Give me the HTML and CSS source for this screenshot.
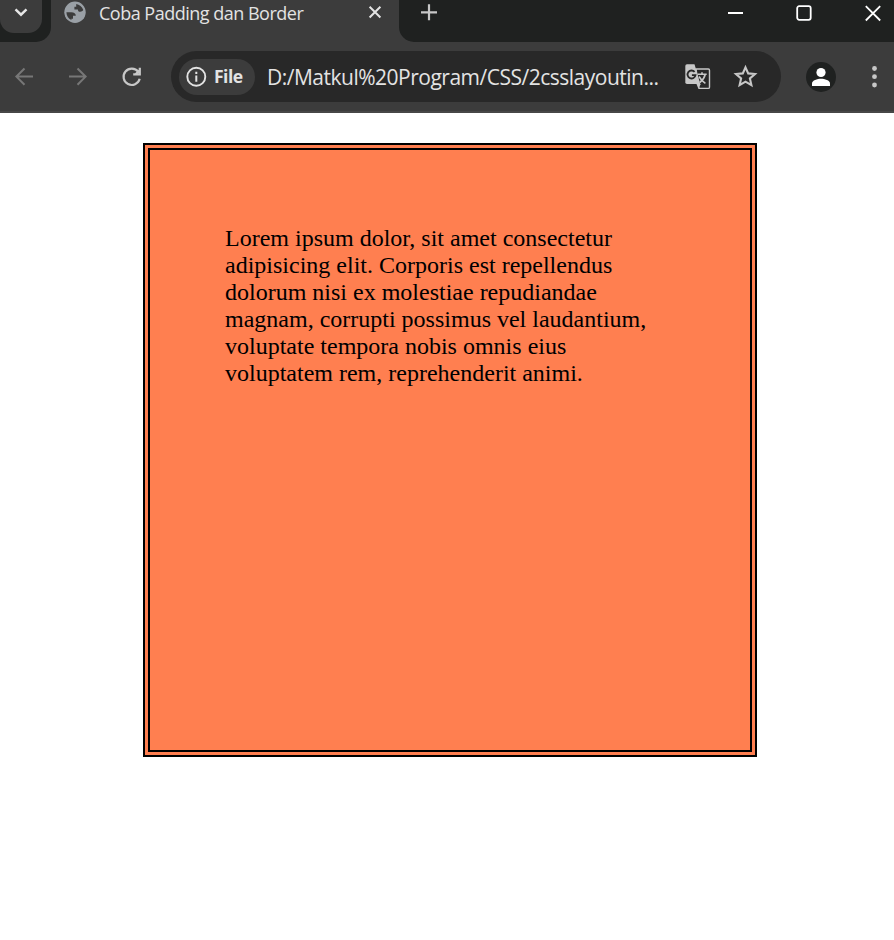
FILE: index.html
```html
<!DOCTYPE html>
<html lang="id">
<head>
<meta charset="utf-8">
<title>Coba Padding dan Border</title>
<link rel="stylesheet" href="styles.css">
</head>
<body>
<header class="browser">
  <div class="tabstrip">
    <div class="strip-left">
      <div class="tab-search"><svg width="42" height="33" viewBox="0 0 42 33"><path d="M15.5 9.3l5.5 5.4 5.5-5.4" fill="none" stroke="#e6e6e6" stroke-width="2.4"/></svg></div>
    </div>
    <div class="tab">
      <svg class="globe" width="22" height="24" viewBox="0 0 22 24"><circle cx="11" cy="12.3" r="10.7" fill="#9aa0a6"/><path d="M12.2 3.9c3.2.4 6 2.8 7.1 6.2-.8 1.2-1.7 1.7-3.1 1.7-1.6 0-2.3-.8-2.3-2.3h-3.5V6.8h1.8zM2.4 12.2h4.8c3 0 4.6 1.3 4.6 3.6H9v2.900H7.400v1.200c-3-1.400-4.900-4.200-5-7.700z" fill="#3c3c3c"/></svg>
      <span class="title">Coba Padding dan Border</span>
      <svg class="close" width="14" height="24" viewBox="0 0 14 24"><path d="M1.6 6.8l10.8 10.7M12.4 6.8L1.6 17.5" stroke="#e3e3e3" stroke-width="2"/></svg>
    </div>
    <div class="strip-right">
      <svg class="plus" width="16" height="24" viewBox="0 0 16 24"><path d="M0 12.3h16M8 4.3v16" stroke="#c7c7c7" stroke-width="2.2"/></svg>
      <svg class="minimize" width="15" height="26" viewBox="0 0 15 26"><path d="M0 13h15" stroke="#fff" stroke-width="2"/></svg>
      <svg class="maximize" width="16" height="26" viewBox="0 0 16 26"><rect x="1.2" y="6.2" width="13.5" height="13.6" rx="2" fill="none" stroke="#fff" stroke-width="1.8"/></svg>
      <svg width="16" height="26" viewBox="0 0 16 26"><path d="M.8 6.2l14.4 14.3M15.2 6.2L.8 20.5" stroke="#fff" stroke-width="1.8"/></svg>
    </div>
  </div>
  <div class="toolbar">
    <svg class="back" width="18" height="18" viewBox="0 0 18 18"><path d="M18 8.6H1.5M9.5.5L1.4 8.6l8.1 8.1" fill="none" stroke="#777" stroke-width="2"/></svg>
    <svg class="forward" width="18" height="18" viewBox="0 0 18 18"><path d="M0 8.600h16.500M8.500.5L16.600 8.600l-8.100 8.100" fill="none" stroke="#777" stroke-width="2"/></svg>
    <svg class="reload" width="20" height="20" viewBox="0 0 20 20"><path d="M16.300 4.800A8.200 8.200 0 1 0 17.700 11.800" fill="none" stroke="#c7c7c7" stroke-width="2.2"/><path d="M17.800.7v6.600H11.200M13.800 7l3.800-3.600" fill="none" stroke="#c7c7c7" stroke-width="2.2"/></svg>
    <div class="omnibox">
      <div class="chip">
        <svg width="20" height="20" viewBox="0 0 20 20"><circle cx="10.3" cy="9.700" r="9" fill="none" stroke="#e3e3e3" stroke-width="1.9"/><path d="M10.300 8.500v6.200M10.300 4.800v2.100" stroke="#e3e3e3" stroke-width="2"/></svg>
        <span class="scheme">File</span>
      </div>
      <span class="url">D:/Matkul%20Program/CSS/2csslayoutin...</span>
      <svg class="translate" width="26" height="26" viewBox="0 0 26 26"><path d="M11 5h12.300q1.200 0 1.200 1.200v17q0 1.200-1.200 1.200H14z" fill="none" stroke="#c7c7c7" stroke-width="1.4"/><path d="M2 .3h7.500L15.300 20H2Q.3 20 .3 18.300V2Q.3.3 2 .3z" fill="#c7c7c7"/><path d="M11.500 20h4.300l-2.500 4.400z" fill="#c7c7c7"/><path d="M9.600 7.900a4 4 0 1 0 .9 3.200H6.900" fill="none" stroke="#282828" stroke-width="1.8"/><path d="M12.700 10.300h9M17 8.300v2M20.200 10.500c-.8 3.400-2.700 6-5.400 8M14 12.500c1.500 2.600 3.600 5 6.400 6.900" fill="none" stroke="#c7c7c7" stroke-width="1.6"/></svg>
      <svg class="star" width="24" height="23" viewBox="0 0 24 23"><path d="M12.500 2.300l2.700 6.100 6.800.6-5.100 4.500 1.500 6.700-5.900-3.500-5.900 3.500 1.500-6.700L3 9l6.800-.6z" fill="none" stroke="#c7c7c7" stroke-width="2.1"/></svg>
    </div>
    <svg class="avatar" width="30" height="30" viewBox="0 0 30 30"><circle cx="15" cy="15" r="15" fill="#1f2120"/><circle cx="15" cy="10.5" r="4.6" fill="#fff"/><path d="M6 24v-2.600C6 18.300 11.300 16.700 15 16.700s9 1.600 9 4.700V24z" fill="#fff"/></svg>
    <svg class="menu" width="6" height="24" viewBox="0 0 6 24"><g fill="#c7c7c7"><circle cx="2.5" cy="3.5" r="2.4"/><circle cx="2.5" cy="11.7" r="2.4"/><circle cx="2.5" cy="20" r="2.4"/></g></svg>
  </div>
</header>
<main class="page">
  <div class="box">Lorem ipsum dolor, sit amet consectetur adipisicing elit. Corporis est repellendus dolorum nisi ex molestiae repudiandae magnam, corrupti possimus vel laudantium, voluptate tempora nobis omnis eius voluptatem rem, reprehenderit animi.</div>
</main>
</body>
</html>
```
FILE: styles.css
```css
* { box-sizing: border-box; }
body {
  margin: 0;
  background: #fff;
  overflow: hidden;
}
svg { display: block; flex: none; overflow: visible; }
.browser {
  height: 113px;
  background: #3c3c3c;
  border-bottom: 2px solid #474747;
  font-family: "Open Sans", "Noto Sans", sans-serif;
  color: #e3e3e3;
  white-space: nowrap;
}
.tabstrip { display: flex; height: 42px; }
.strip-left {
  width: 51px;
  background: #1f2120;
  border-bottom-right-radius: 15px;
}
.tab-search {
  width: 42px;
  height: 33px;
  background: #3c3c3c;
  border-radius: 0 0 14px 14px;
}
.tab {
  display: flex;
  width: 348px;
  padding-left: 13px;
}
.title {
  width: 269px;
  margin-left: 13px;
  font-size: 18px;
  line-height: 27px;
  letter-spacing: -0.5px;
}
.strip-right {
  display: flex;
  flex: 1;
  padding-left: 22px;
  background: #1f2120;
  border-bottom-left-radius: 15px;
}
.minimize { margin-left: 291px; }
.maximize { margin: 0 53px; }
.toolbar {
  display: flex;
  align-items: center;
  height: 69px;
  padding-left: 15px;
}
.forward { margin-left: 36px; }
.reload { margin-left: 35px; }
.omnibox {
  display: flex;
  align-items: center;
  width: 610px;
  height: 51px;
  margin-left: 29px;
  padding-left: 8px;
  border-radius: 26px;
  background: #282828;
}
.chip {
  display: flex;
  align-items: center;
  width: 76px;
  height: 36px;
  padding-left: 7px;
  border-radius: 18px;
  background: #3c3c3c;
}
.scheme {
  margin: -1px 0 0 8px;
  font-size: 17.5px;
  font-weight: 700;
  letter-spacing: -0.5px;
}
.url {
  width: 406px;
  margin-left: 12px;
  font-size: 21px;
  letter-spacing: -0.5px;
}
.translate { margin-left: 12px; }
.star { margin-left: 22px; }
.avatar { margin-left: 25px; }
.menu { margin-left: 36px; }
.page { padding: 30px 0 0 143px; }
.box {
  width: 614px;
  height: 614px;
  padding: 75px;
  border: 7px double #000;
  background: coral;
  color: #000;
  font: 24px/27px "Liberation Serif", serif;
}
```
